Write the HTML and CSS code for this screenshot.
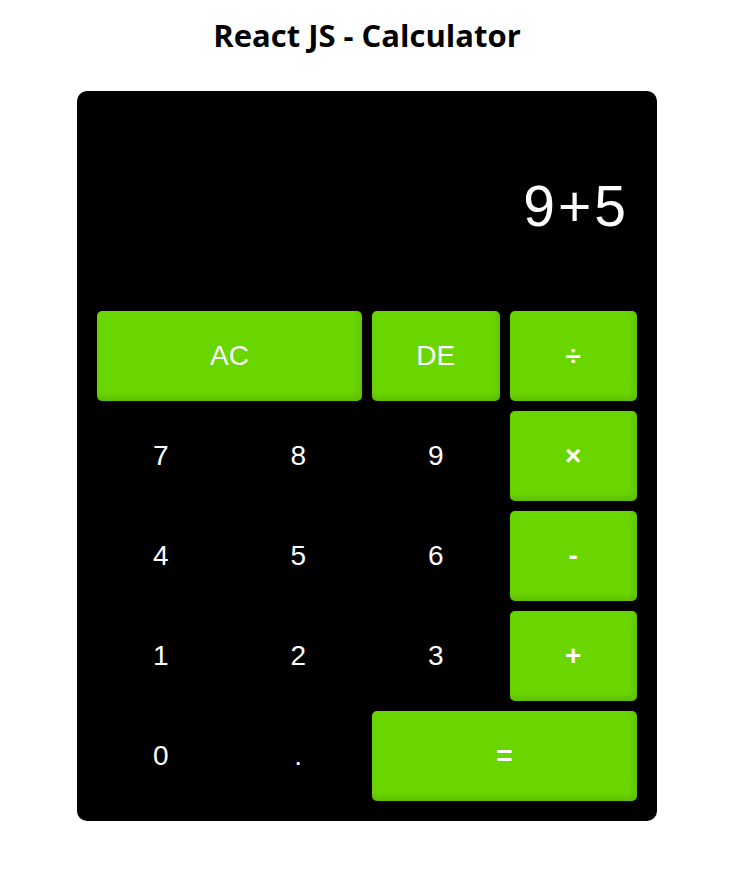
FILE: index.html
```html
<!DOCTYPE html>
<html lang="en">
<head>
<meta charset="utf-8">
<title>React JS - Calculator</title>
<link rel="stylesheet" href="styles.css">
</head>
<body>
<div class="app">
  <h1 class="title">React JS - Calculator</h1>
  <div class="calculator">
    <div class="display">9+5</div>
    <div class="keys">
      <button class="key op span-2">AC</button>
      <button class="key op">DE</button>
      <button class="key op sym">÷</button>
      <button class="key">7</button>
      <button class="key">8</button>
      <button class="key">9</button>
      <button class="key op sym">×</button>
      <button class="key">4</button>
      <button class="key">5</button>
      <button class="key">6</button>
      <button class="key op sym">-</button>
      <button class="key">1</button>
      <button class="key">2</button>
      <button class="key">3</button>
      <button class="key op sym">+</button>
      <button class="key">0</button>
      <button class="key">.</button>
      <button class="key op sym span-2">=</button>
    </div>
  </div>
</div>
</body>
</html>
```

FILE: styles.css
```css
html, body {
  margin: 0;
  padding: 0;
  background: #ffffff;
}

.app {
  width: 734px;
  display: flex;
  flex-direction: column;
  align-items: center;
}

.title {
  margin: 14px 0 0;
  height: 77px;
  font-family: "Open Sans", "Noto Sans", sans-serif;
  font-weight: 700;
  font-size: 31px;
  line-height: 42px;
  letter-spacing: 0;
  color: #000;
}

.calculator {
  width: 580px;
  box-sizing: border-box;
  padding: 20px;
  background: #000;
  border-radius: 10px;
  display: flex;
  flex-direction: column;
}

.display {
  height: 190px;
  margin-bottom: 10px;
  display: flex;
  align-items: center;
  justify-content: flex-end;
  padding: 0 8px 0 0;
  color: #fff;
  font-family: "Liberation Sans", Arial, sans-serif;
  font-size: 57px;
  letter-spacing: 3px;
}

.keys {
  display: grid;
  grid-template-columns: repeat(4, 1fr);
  grid-auto-rows: 90px;
  gap: 10px;
}

.key {
  border: none;
  background: transparent;
  color: #fff;
  font-family: "Liberation Sans", Arial, sans-serif;
  font-size: 28px;
  border-radius: 5px;
  padding: 0;
}

.key.op {
  background: #6ad600;
  box-shadow: inset -2px -4px 6px rgba(0, 0, 0, 0.12);
}

.key.sym {
  font-weight: 700;
}

.span-2 {
  grid-column: span 2;
}
```
